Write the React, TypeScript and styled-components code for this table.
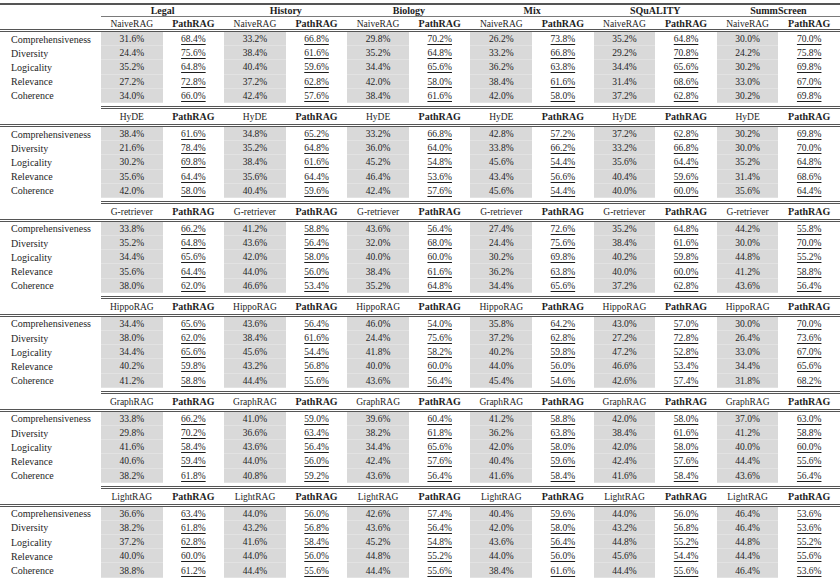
import React from "react";
import styled, { createGlobalStyle } from "styled-components";

const datasets = ["Legal", "History", "Biology", "Mix", "SQuALITY", "SummScreen"];
const metrics = ["Comprehensiveness", "Diversity", "Logicality", "Relevance", "Coherence"];

// baseline win rates per metric (one value per dataset); PathRAG is the complement
const blocks: { baseline: string; rows: number[][] }[] = [
    {
        baseline: "NaiveRAG",
        rows: [
            [31.6, 33.2, 29.8, 26.2, 35.2, 30.0],
            [24.4, 38.4, 35.2, 33.2, 29.2, 24.2],
            [35.2, 40.4, 34.4, 36.2, 34.4, 30.2],
            [27.2, 37.2, 42.0, 38.4, 31.4, 33.0],
            [34.0, 42.4, 38.4, 42.0, 37.2, 30.2],
        ],
    },
    {
        baseline: "HyDE",
        rows: [
            [38.4, 34.8, 33.2, 42.8, 37.2, 30.2],
            [21.6, 35.2, 36.0, 33.8, 33.2, 30.0],
            [30.2, 38.4, 45.2, 45.6, 35.6, 35.2],
            [35.6, 35.6, 46.4, 43.4, 40.4, 31.4],
            [42.0, 40.4, 42.4, 45.6, 40.0, 35.6],
        ],
    },
    {
        baseline: "G-retriever",
        rows: [
            [33.8, 41.2, 43.6, 27.4, 35.2, 44.2],
            [35.2, 43.6, 32.0, 24.4, 38.4, 30.0],
            [34.4, 42.0, 40.0, 30.2, 40.2, 44.8],
            [35.6, 44.0, 38.4, 36.2, 40.0, 41.2],
            [38.0, 46.6, 35.2, 34.4, 37.2, 43.6],
        ],
    },
    {
        baseline: "HippoRAG",
        rows: [
            [34.4, 43.6, 46.0, 35.8, 43.0, 30.0],
            [38.0, 38.4, 24.4, 37.2, 27.2, 26.4],
            [34.4, 45.6, 41.8, 40.2, 47.2, 33.0],
            [40.2, 43.2, 40.0, 44.0, 46.6, 34.4],
            [41.2, 44.4, 43.6, 45.4, 42.6, 31.8],
        ],
    },
    {
        baseline: "GraphRAG",
        rows: [
            [33.8, 41.0, 39.6, 41.2, 42.0, 37.0],
            [29.8, 36.6, 38.2, 36.2, 38.4, 41.2],
            [41.6, 43.6, 34.4, 42.0, 42.0, 40.0],
            [40.6, 44.0, 42.4, 40.4, 42.4, 44.4],
            [38.2, 40.8, 43.6, 41.6, 41.6, 43.6],
        ],
    },
    {
        baseline: "LightRAG",
        rows: [
            [36.6, 44.0, 42.6, 40.4, 44.0, 46.4],
            [38.2, 43.2, 43.6, 42.0, 43.2, 46.4],
            [37.2, 41.6, 45.2, 43.6, 44.8, 44.8],
            [40.0, 44.0, 44.8, 44.0, 45.6, 44.4],
            [38.8, 44.4, 44.4, 38.4, 44.4, 46.4],
        ],
    },
];

const pct = (v: number) => `${v.toFixed(1)}%`;

const GlobalStyle = createGlobalStyle`
    html, body {
        margin: 0;
        padding: 0;
        background: #ffffff;
    }
    body {
        font-family: "Liberation Serif", "Times New Roman", serif;
        color: #1e1e1e;
    }
`;

const Table = styled.div`
    width: 840px;
    display: flex;
    flex-direction: column;
`;

const Rule = styled.div<{ $top?: boolean }>`
    height: 2px;
    background: #555555;
    margin-top: ${({ $top }) => ($top ? "3px" : "0")};
`;

const Row = styled.div<{ $height: number; $ruleBelow?: boolean; $gapAbove?: boolean }>`
    display: grid;
    grid-template-columns: 101px repeat(12, 1fr);
    height: ${({ $height }) => $height}px;
    box-sizing: content-box;
    margin-top: ${({ $gapAbove }) => ($gapAbove ? "3px" : "0")};
    border-bottom: ${({ $ruleBelow }) => ($ruleBelow ? "3px double #555555" : "none")};
`;

const GroupCell = styled.div`
    grid-column: span 2;
    display: flex;
    align-items: center;
    justify-content: center;
    font-size: 10px;
    font-weight: bold;
    border-bottom: 1px solid #7a7a7a;
`;

const HeadCell = styled.div<{ $bold?: boolean; $ruleAbove?: boolean }>`
    display: flex;
    align-items: center;
    justify-content: center;
    font-size: ${({ $bold }) => ($bold ? "10px" : "9.5px")};
    font-weight: ${({ $bold }) => ($bold ? "bold" : "normal")};
    border-top: ${({ $ruleAbove }) => ($ruleAbove ? "3px double #555555" : "none")};
    padding-top: 1px;
`;

const Blank = styled.div``;

const Label = styled.div`
    display: flex;
    align-items: center;
    padding-left: 11px;
    font-size: 10px;
    white-space: nowrap;
`;

const Value = styled.div<{ $shaded?: boolean; $best?: boolean }>`
    display: flex;
    align-items: center;
    justify-content: center;
    font-size: 9.5px;
    background: ${({ $shaded }) => ($shaded ? "#d9d9d9" : "transparent")};
    box-shadow: ${({ $shaded }) => ($shaded ? "inset 0 -1px 0 #e2e2e2" : "none")};
    text-decoration: ${({ $best }) => ($best ? "underline" : "none")};
    text-decoration-thickness: 1px;
    text-underline-offset: 2px;
`;

const ROW_H = 14.2;

const Block: React.FC<{ baseline: string; rows: number[][]; first: boolean }> = ({ baseline, rows, first }) => (
    <>
        <Row $height={first ? 12 : 18} $ruleBelow $gapAbove={!first}>
            <Blank />
            {datasets.map((d) => (
                <React.Fragment key={d}>
                    <HeadCell $ruleAbove={!first}>{baseline}</HeadCell>
                    <HeadCell $bold $ruleAbove={!first}>
                        PathRAG
                    </HeadCell>
                </React.Fragment>
            ))}
        </Row>
        {rows.map((vals, i) => (
            <Row key={metrics[i]} $height={ROW_H}>
                <Label>{metrics[i]}</Label>
                {vals.map((v, j) => (
                    <React.Fragment key={j}>
                        <Value $shaded>{pct(v)}</Value>
                        <Value $best>{pct(100 - v)}</Value>
                    </React.Fragment>
                ))}
            </Row>
        ))}
    </>
);

const App: React.FC = () => (
    <>
        <GlobalStyle />
        <Table>
            <Rule $top />
            <Row $height={12}>
                <Blank />
                {datasets.map((d) => (
                    <GroupCell key={d}>{d}</GroupCell>
                ))}
            </Row>
            {blocks.map((b, i) => (
                <Block key={b.baseline} baseline={b.baseline} rows={b.rows} first={i === 0} />
            ))}
            <Rule />
        </Table>
    </>
);

export default App;
